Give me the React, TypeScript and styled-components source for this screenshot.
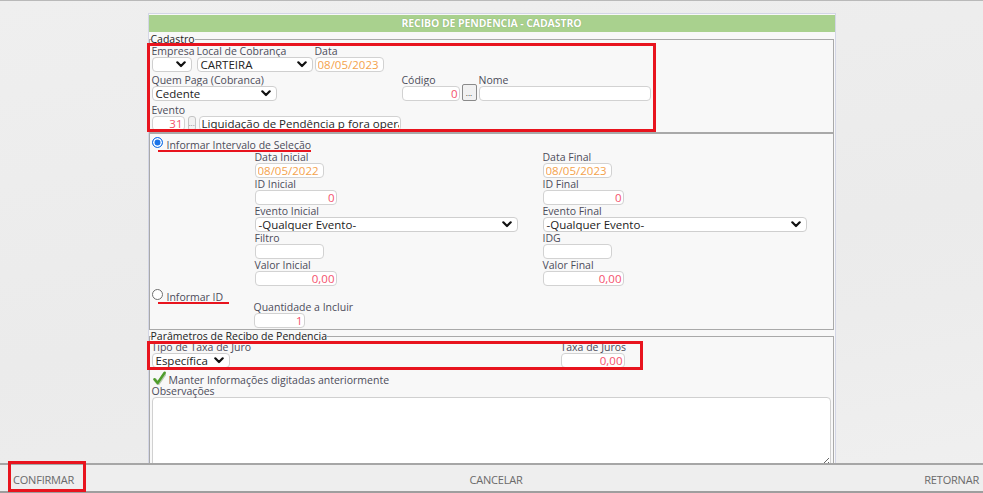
import React from "react";
import styled, { createGlobalStyle, css } from "styled-components";

const Global = createGlobalStyle`
  html, body { margin: 0; padding: 0; }
  body {
    font-family: "Open Sans", "Liberation Sans", Arial, sans-serif;
    background: #ededed;
  }
  #root { height: 493px; }
`;

const Page = styled.div`
  position: relative;
  height: 493px;
  box-sizing: border-box;
  border-top: 1px solid #b9b9b9;
  display: flex;
  flex-direction: column;
  overflow: hidden;
  background: linear-gradient(170deg, #efefef 0%, #ebebeb 55%, #ececec 70%, #f0f0f0 100%);
`;

const Main = styled.main`
  flex: 1;
  min-height: 0;
  display: flex;
  justify-content: center;
  padding-top: 12px;
  overflow: hidden;
`;

const Panel = styled.section`
  width: 688px;
  box-sizing: border-box;
  border: 1px solid #d3d6e6;
  border-bottom: none;
  padding-top: 1px;
  background: #f8f8f8;
  display: flex;
  flex-direction: column;
`;

const Header = styled.div`
  height: 17px;
  line-height: 17px;
  background: #a9d18e;
  color: #ffffff;
  font-size: 10.5px;
  font-weight: 700;
  text-align: center;
  text-shadow: 0 0 1px rgba(60, 90, 40, 0.45);
  letter-spacing: -0.1px;
`;

const Fieldset = styled.fieldset<{ $mt?: number }>`
  margin: ${(p) => p.$mt ?? 0}px 1px 0 0;
  padding: 0 0 1px 2px;
  border: 1px solid #a9a9a9;
  min-width: 0;
  flex: none;
`;

const Legend = styled.legend`
  padding: 0;
  margin-left: -1px;
  font-size: 10.5px;
  line-height: 12px;
  color: #222;
`;

const Row = styled.div<{ $mt?: number }>`
  display: flex;
  align-items: flex-end;
  margin-top: ${(p) => p.$mt ?? 0}px;
`;

const Field = styled.div<{ $w: number; $ml?: number }>`
  display: flex;
  flex-direction: column;
  width: ${(p) => p.$w}px;
  margin-left: ${(p) => p.$ml ?? 0}px;
  flex: none;
`;

const Label = styled.span`
  display: block;
  height: 11px;
  font-size: 10.5px;
  line-height: 11px;
  color: #4c4c5a;
  white-space: nowrap;
`;

const toneColor = {
  red: "#f4516c",
  orange: "#f4a24c",
  dark: "#262626",
};

const Input = styled.input<{ $w: number; $tone?: keyof typeof toneColor; $right?: boolean; $ml?: number }>`
  box-sizing: border-box;
  width: ${(p) => p.$w}px;
  height: 15px;
  margin: 0 0 0 ${(p) => p.$ml ?? 0}px;
  padding: 0 1px 0 2px;
  border: 1px solid #d2d2d2;
  border-radius: 4px;
  background: #fff;
  font-family: "Open Sans", "Liberation Sans", Arial, sans-serif;
  font-size: 11.5px;
  color: ${(p) => toneColor[p.$tone ?? "dark"]};
  text-align: ${(p) => (p.$right ? "right" : "left")};
  outline: none;
  flex: none;
`;

const Select = styled.div<{ $w: number }>`
  box-sizing: border-box;
  width: ${(p) => p.$w}px;
  height: 15px;
  border: 1px solid #cfcfcf;
  border-radius: 4px;
  background: #fff;
  display: flex;
  align-items: center;
  justify-content: space-between;
  padding: 0 5px 0 3px;
  font-size: 11.5px;
  color: #222;
  white-space: nowrap;
  overflow: hidden;
  flex: none;
`;

const DotsButton = styled.div<{ $w: number; $h: number; $ml?: number }>`
  box-sizing: border-box;
  width: ${(p) => p.$w}px;
  height: ${(p) => p.$h}px;
  margin-left: ${(p) => p.$ml ?? 0}px;
  border: 1px solid #8a8a8a;
  border-radius: 2px;
  background: #f1f1f1;
  font-size: 8px;
  line-height: 8px;
  color: #333;
  display: flex;
  align-items: flex-end;
  justify-content: center;
  padding-bottom: 3px;
  overflow: hidden;
  flex: none;
`;

const SmallButton = styled(DotsButton)`
  border-color: #c4c4c4;
  border-radius: 3px;
  color: #888;
  justify-content: flex-start;
  padding-left: 0;
`;

const RadioRow = styled.div<{ $mt: number; $h: number }>`
  display: flex;
  align-items: flex-start;
  margin-top: ${(p) => p.$mt}px;
  height: ${(p) => p.$h}px;
`;

const Radio = styled.span<{ $checked?: boolean }>`
  box-sizing: border-box;
  width: 11px;
  height: 11px;
  border-radius: 50%;
  flex: none;
  ${(p) =>
    p.$checked
      ? css`
          background: #1a73e8;
          border: 1.5px solid #1a73e8;
          box-shadow: inset 0 0 0 1.5px #ffffff;
        `
      : css`
          background: #fff;
          border: 1px solid #6f6f6f;
        `}
`;

const RadioText = styled.span`
  margin: 2px 0 0 4px;
  font-size: 10.5px;
  line-height: 12px;
  color: #4c4c5a;
  white-space: nowrap;
`;

const RangeGrid = styled.div`
  display: grid;
  grid-template-columns: 288px 1fr;
  row-gap: 1px;
  margin-left: 103px;
`;

const CheckRow = styled.div`
  display: flex;
  align-items: center;
  height: 16px;
  margin-top: 2px;
  padding-left: 1px;
`;

const CheckText = styled.span`
  margin-left: 3px;
  margin-top: 3px;
  font-size: 10.5px;
  line-height: 12px;
  color: #4c4c5a;
  white-space: nowrap;
`;

const Notes = styled.textarea`
  display: block;
  box-sizing: border-box;
  width: 679px;
  height: 70px;
  margin: 0;
  border: 1px solid #d0d0d0;
  border-radius: 4px;
  background: #fff;
  resize: both;
  outline: none;
`;

const Footer = styled.footer`
  flex: none;
  height: 30px;
  box-sizing: border-box;
  border-top: 2px solid #a6a6a6;
  border-bottom: 2px solid #9e9e9e;
  background: #eeeeee;
  display: grid;
  grid-template-columns: 1fr auto 1fr;
  align-items: center;
  padding: 0 4px 0 13px;
`;

const FooterAction = styled.span<{ $align: "start" | "center" | "end" }>`
  justify-self: ${(p) => p.$align};
  font-size: 11px;
  color: #6a6a6a;
  letter-spacing: -0.2px;
  text-transform: uppercase;
  margin-top: 2px;
`;

const Mark = styled.div<{ $x: number; $y: number; $w: number; $h: number; $line?: boolean }>`
  position: absolute;
  left: ${(p) => p.$x}px;
  top: ${(p) => p.$y}px;
  width: ${(p) => p.$w}px;
  height: ${(p) => p.$h}px;
  box-sizing: border-box;
  pointer-events: none;
  ${(p) =>
    p.$line
      ? css`
          background: #e8141e;
        `
      : css`
          border: 3px solid #e8141e;
        `}
`;

const Chevron = () => (
  <svg width="10" height="7" viewBox="0 0 10 7">
    <polyline points="1.3,1.3 5,5 8.7,1.3" fill="none" stroke="#111" strokeWidth="2.2" strokeLinecap="round" strokeLinejoin="round" />
  </svg>
);

const Tick = () => (
  <svg width="13" height="14" viewBox="0 0 13 14">
    <path d="M1.5 8.2 L4.6 12 L11.6 1.8" fill="none" stroke="#b9c9b0" strokeWidth="3.4" strokeLinecap="round" strokeLinejoin="round" transform="translate(0.6,0.6)" />
    <path d="M1.5 8.2 L4.6 12 L11.6 1.8" fill="none" stroke="#4f9d2c" strokeWidth="2.4" strokeLinecap="round" strokeLinejoin="round" />
  </svg>
);

export default function App() {
  return (
    <>
      <Global />
      <Page>
        <Main>
          <Panel>
            <Header>RECIBO DE PENDENCIA - CADASTRO</Header>

            <Fieldset $mt={1}>
              <Legend>Cadastro</Legend>
              <Row $mt={1}>
                <Field $w={40}>
                  <Label>Empresa</Label>
                  <Select $w={40}>
                    <span />
                    <Chevron />
                  </Select>
                </Field>
                <Field $w={116} $ml={5}>
                  <Label>Local de Cobrança</Label>
                  <Select $w={116}>
                    <span>CARTEIRA</span>
                    <Chevron />
                  </Select>
                </Field>
                <Field $w={69} $ml={2}>
                  <Label>Data</Label>
                  <Input $w={69} $tone="orange" readOnly value="08/05/2023" />
                </Field>
              </Row>
              <Row $mt={3}>
                <Field $w={125}>
                  <Label>Quem Paga (Cobranca)</Label>
                  <Select $w={125}>
                    <span>Cedente</span>
                    <Chevron />
                  </Select>
                </Field>
                <Field $w={58} $ml={125}>
                  <Label>Código</Label>
                  <Input $w={58} $tone="red" $right readOnly value="0" />
                </Field>
                <DotsButton $w={15} $h={17} $ml={2}>...</DotsButton>
                <Field $w={172} $ml={2}>
                  <Label>Nome</Label>
                  <Input $w={172} readOnly value="" />
                </Field>
              </Row>
              <Row $mt={4}>
                <Field $w={33}>
                  <Label>Evento</Label>
                  <Input $w={33} $tone="red" $right readOnly value="31" />
                </Field>
                <SmallButton $w={8} $h={15} $ml={3}>...</SmallButton>
                <Input $w={202} $ml={3} readOnly value="Liquidação de Pendência p fora operação" />
              </Row>
            </Fieldset>

            <Fieldset>
              <RadioRow $mt={3} $h={15}>
                <Radio $checked />
                <RadioText>Informar Intervalo de Seleção</RadioText>
              </RadioRow>
              <RangeGrid>
                <Field $w={69}>
                  <Label>Data Inicial</Label>
                  <Input $w={69} $tone="orange" readOnly value="08/05/2022" />
                </Field>
                <Field $w={69}>
                  <Label>Data Final</Label>
                  <Input $w={69} $tone="orange" readOnly value="08/05/2023" />
                </Field>
                <Field $w={82}>
                  <Label>ID Inicial</Label>
                  <Input $w={82} $tone="red" $right readOnly value="0" />
                </Field>
                <Field $w={81}>
                  <Label>ID Final</Label>
                  <Input $w={81} $tone="red" $right readOnly value="0" />
                </Field>
                <Field $w={263}>
                  <Label>Evento Inicial</Label>
                  <Select $w={263}>
                    <span>-Qualquer Evento-</span>
                    <Chevron />
                  </Select>
                </Field>
                <Field $w={264}>
                  <Label>Evento Final</Label>
                  <Select $w={264}>
                    <span>-Qualquer Evento-</span>
                    <Chevron />
                  </Select>
                </Field>
                <Field $w={69}>
                  <Label>Filtro</Label>
                  <Input $w={69} readOnly value="" />
                </Field>
                <Field $w={69}>
                  <Label>IDG</Label>
                  <Input $w={69} readOnly value="" />
                </Field>
                <Field $w={82}>
                  <Label>Valor Inicial</Label>
                  <Input $w={82} $tone="red" $right readOnly value="0,00" />
                </Field>
                <Field $w={81}>
                  <Label>Valor Final</Label>
                  <Input $w={81} $tone="red" $right readOnly value="0,00" />
                </Field>
              </RangeGrid>
              <RadioRow $mt={3} $h={13}>
                <Radio />
                <RadioText>Informar ID</RadioText>
              </RadioRow>
              <Field $w={51} $ml={102}>
                <Label>Quantidade a Incluir</Label>
                <Input $w={51} $tone="red" $right readOnly value="1" />
              </Field>
            </Fieldset>

            <Fieldset>
              <Legend>Parâmetros de Recibo de Pendencia</Legend>
              <Row>
                <Field $w={78}>
                  <Label>Tipo de Taxa de Juro</Label>
                  <Select $w={78}>
                    <span>Específica</span>
                    <Chevron />
                  </Select>
                </Field>
                <Field $w={64} $ml={331}>
                  <Label>Taxa de Juros</Label>
                  <Input $w={64} $tone="red" $right readOnly value="0,00" />
                </Field>
              </Row>
              <CheckRow>
                <Tick />
                <CheckText>Manter Informações digitadas anteriormente</CheckText>
              </CheckRow>
              <Label>Observações</Label>
              <Notes readOnly />
            </Fieldset>
          </Panel>
        </Main>

        <Footer>
          <FooterAction $align="start">Confirmar</FooterAction>
          <FooterAction $align="center">Cancelar</FooterAction>
          <FooterAction $align="end">Retornar</FooterAction>
        </Footer>

        <Mark $x={147} $y={42} $w={509} $h={89} />
        <Mark $x={147} $y={340} $w={496} $h={29} />
        <Mark $x={8} $y={460} $w={78} $h={31} />
        <Mark $line $x={158} $y={149} $w={153} $h={2} />
        <Mark $line $x={158} $y={301} $w={71} $h={2} />
      </Page>
    </>
  );
}
